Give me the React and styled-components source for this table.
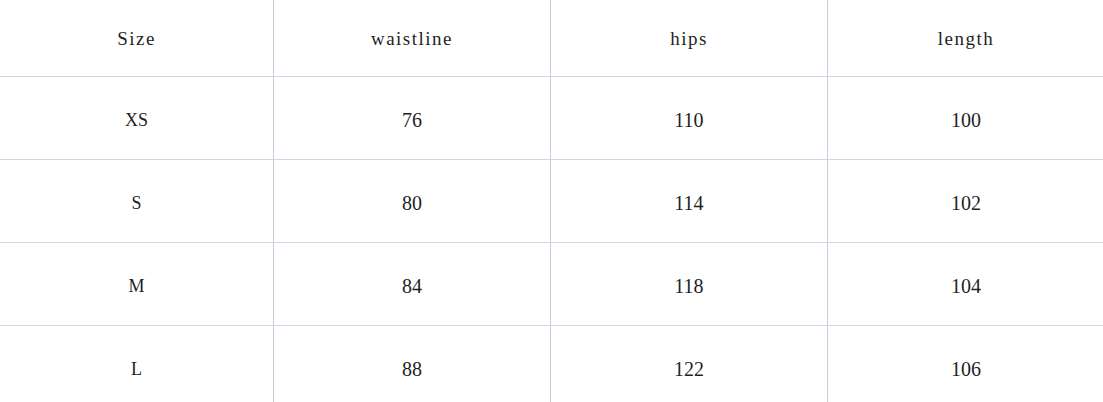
import React from "react";
import styled, { createGlobalStyle } from "styled-components";

const filas = [
    ["XS", "76", "110", "100"],
    ["S", "80", "114", "102"],
    ["M", "84", "118", "104"],
    ["L", "88", "122", "106"],
];

const cabecera = ["Size", "waistline", "hips", "length"];

const App = () => {
    return (
        <>
            <EstilosGlobales />
            <Tabla>
                {cabecera.map((titulo, i) => (
                    <Celda key={titulo} encabezado ultima={i === 3}>
                        <Texto encabezado>{titulo}</Texto>
                    </Celda>
                ))}
                {filas.map((fila) =>
                    fila.map((valor, i) => (
                        <Celda key={fila[0] + i} ultima={i === 3}>
                            <Texto talla={i === 0}>{valor}</Texto>
                        </Celda>
                    ))
                )}
            </Tabla>
        </>
    );
};

const EstilosGlobales = createGlobalStyle`
	body {
		margin: 0;
		background: #fff;
		overflow: hidden;
	}
`;

const Tabla = styled.div`
	display: grid;
	grid-template-columns: 274px 277px 277px 276px;
	grid-template-rows: 77px repeat(4, 83px);
	width: 1104px;
	color: #1f1f1f;
`;

const Celda = styled.div.withConfig({
    shouldForwardProp: (prop) => !["encabezado", "ultima"].includes(prop),
})`
	display: flex;
	align-items: center;
	justify-content: center;
	border-bottom: 1px solid #d2d5e4;
	border-right: ${(props) => (props.ultima ? "none" : "1px solid #c9ccda")};
	padding-top: ${(props) => (props.encabezado ? "0" : "4px")};
`;

const Texto = styled.span.withConfig({
    shouldForwardProp: (prop) => !["encabezado", "talla"].includes(prop),
})`
	font-family: "Liberation Serif", serif;
	font-size: ${(props) => (props.encabezado ? "19px" : props.talla ? "18px" : "20px")};
	letter-spacing: ${(props) => (props.encabezado ? "1.5px" : "0")};
	line-height: 1;
`;

export default App;
